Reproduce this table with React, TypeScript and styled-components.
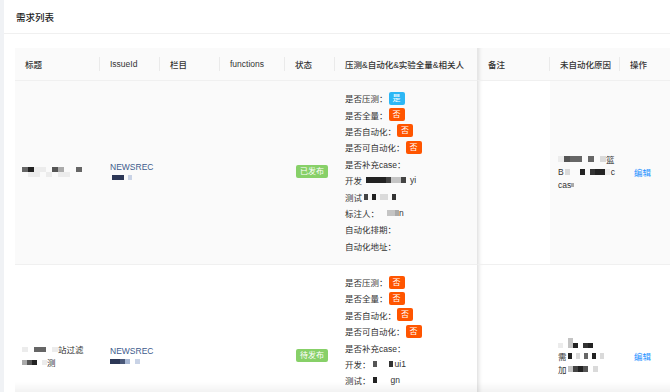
import React from 'react'
import styled, { createGlobalStyle } from 'styled-components'

const Global = createGlobalStyle`
  html, body {
    margin: 0;
    padding: 0;
    overflow: hidden;
    background: #f0f2f5;
    font-family: "Liberation Sans", "Noto Sans CJK SC", sans-serif;
    color: rgba(0, 0, 0, 0.85);
  }
`

const Page = styled.div`
  padding-left: 4px;
  height: 392px;
  overflow: hidden;
`

const Card = styled.div`
  background: #fff;
  height: 100%;
`

const CardHead = styled.div`
  height: 33px;
  display: flex;
  align-items: center;
  padding-left: 12px;
  border-bottom: 1px solid #f0f0f0;
  font-size: 9.5px;
  font-weight: 500;
  color: #222;
`

const CardBody = styled.div`
  padding: 14px 0 0 11px;
`

const Table = styled.table`
  width: 680px;
  table-layout: fixed;
  border-collapse: separate;
  border-spacing: 0;
  font-size: 8.5px;
`

const Th = styled.th<{ $fixed?: boolean; $sep?: boolean }>`
  position: relative;
  height: 32px;
  padding: 0 10px;
  text-align: left;
  font-weight: 500;
  color: #333;
  background: #fafafa;
  border-bottom: 1px solid #f0f0f0;
  white-space: nowrap;
  ${p => p.$fixed && `border-left: 1px solid #e6e6e6; box-shadow: inset 5px 0 4px -4px rgba(0,0,0,0.12);`}
  &::after {
    content: '';
    display: ${p => (p.$sep ? 'block' : 'none')};
    position: absolute;
    right: 0;
    top: 50%;
    width: 1px;
    height: 14px;
    margin-top: -7px;
    background: #eaeaea;
  }
`

const Td = styled.td<{ $fixed?: boolean; $hover?: boolean; $pl?: number }>`
  padding: 9px 4px 10px ${p => p.$pl ?? 10}px;
  vertical-align: middle;
  border-bottom: 1px solid #f0f0f0;
  background: ${p => (p.$hover && !p.$fixed ? '#fafafa' : '#fff')};
  color: #333;
  white-space: nowrap;
  ${p => p.$fixed && `border-left: 1px solid #e6e6e6; box-shadow: inset 5px 0 4px -4px rgba(0,0,0,0.12);`}
`

const Line = styled.div<{ $lh?: number }>`
  display: flex;
  align-items: center;
  height: ${p => p.$lh ?? 16.4}px;
  white-space: nowrap;
`

const Tag = styled.span<{ $color: string }>`
  display: inline-block;
  margin-left: 1px;
  padding: 0 4px;
  height: 13px;
  line-height: 13px;
  font-size: 8px;
  color: #fff;
  white-space: nowrap;
  border-radius: 2px;
  background: ${p => p.$color};
`

const Issue = styled.span`
  color: #3d5a8c;
  font-size: 8.5px;
`

const Action = styled.a`
  color: #1890ff;
  cursor: pointer;
`

const Fade = styled.div`
  position: fixed;
  left: 15px;
  right: 0;
  bottom: 0;
  height: 10px;
  background: linear-gradient(rgba(0, 0, 0, 0), rgba(0, 0, 0, 0.05));
  pointer-events: none;
`

// pixelated (mosaic) blocks that hide real names in the source
const MosaicBox = styled.span<{ $gap?: number }>`
  display: inline-flex;
  flex-direction: column;
  margin: 0 ${p => p.$gap ?? 0}px;
`

const MosaicRow = styled.span`
  display: flex;
`

const Px = styled.span<{ $c: string; $w: number; $h: number }>`
  display: block;
  width: ${p => p.$w}px;
  height: ${p => p.$h}px;
  background: ${p => p.$c};
`

const grays: Record<string, string> = {
  '0': '#222', '1': '#333', '2': '#444', '3': '#555', '4': '#666',
  '5': '#888', '6': '#aaa', '7': '#c4c4c4', '8': '#dadada', '9': '#ececec',
}
const navy: Record<string, string> = {
  '0': '#2c3756', '3': '#4a5878', '5': '#6b7a99', '7': '#a8b8d4', '8': '#c9d3e6', '9': '#e4eaf4',
}

function Mosaic({ p, w = 6, h = 6, gap = 0, tone = grays }: { p: string; w?: number; h?: number; gap?: number; tone?: Record<string, string> }) {
  return (
    <MosaicBox $gap={gap}>
      {p.split('|').map((row, i) => (
        <MosaicRow key={i}>
          {row.split('').map((ch, j) => (
            <Px key={j} $w={w} $h={h} $c={tone[ch] ?? 'transparent'} />
          ))}
        </MosaicRow>
      ))}
    </MosaicBox>
  )
}

const YES = '#2db7f5'
const NO = '#f50'
const GREEN = '#87d068'

function Checks({ tags, dev, test, mark }: { tags: boolean[]; dev: React.ReactNode; test: React.ReactNode; mark: React.ReactNode }) {
  const names = ['是否压测：', '是否全量：', '是否自动化：', '是否可自动化：']
  return (
    <div>
      {names.map((n, i) => (
        <Line key={n}>
          {n}
          <Tag $color={tags[i] ? YES : NO}>{tags[i] ? '是' : '否'}</Tag>
        </Line>
      ))}
      <Line>是否补充case：</Line>
      <Line>{dev}</Line>
      <Line>{test}</Line>
      <Line>{mark}</Line>
      <Line>自动化排期：</Line>
      <Line>自动化地址：</Line>
    </div>
  )
}

const cols = [85, 60, 60, 65, 50, 142, 73, 70, 75]
const heads = ['标题', 'IssueId', '栏目', 'functions', '状态', '压测&自动化&实验全量&相关人', '备注', '未自动化原因', '操作']

export default function App() {
  return (
    <Page>
      <Global />
      <Card>
        <CardHead>需求列表</CardHead>
        <CardBody>
          <Table>
            <colgroup>
              {cols.map((w, i) => <col key={i} style={{ width: w }} />)}
            </colgroup>
            <thead>
              <tr>
                {heads.map((h, i) => (
                  <Th key={h} $fixed={i === 6} $sep={i !== 5 && i !== 8}>{h}</Th>
                ))}
              </tr>
            </thead>
            <tbody>
              <tr>
                <Td $hover $pl={7}>
                  <Line><Mosaic p="4099.36..4|.99.9.99.." h={5} /></Line>
                </Td>
                <Td $hover>
                  <Line $lh={11}><Issue>NEWSREC</Issue></Line>
                  <Line $lh={9}><Mosaic p="000.8" w={4} h={5} tone={navy} gap={2} /></Line>
                </Td>
                <Td $hover />
                <Td $hover />
                <Td $hover><Tag $color={GREEN}>已发布</Tag></Td>
                <Td $hover>
                  <Checks
                    tags={[true, false, false, false]}
                    dev={<>开发<Mosaic p="00002772" w={5} gap={4} />yi</>}
                    test={<>测试<Mosaic p="2.0.88.1" w={4} gap={2} /></>}
                    mark={<>标注人：<Mosaic p="..776" w={4} />n</>}
                  />
                </Td>
                <Td $hover $fixed />
                <Td $hover $pl={8}>
                  <Line $lh={13}><Mosaic p="9344.4.8" w={6} />篮</Line>
                  <Line $lh={13}>B<Mosaic p="8..0.1009" w={5} gap={1} />c</Line>
                  <Line $lh={13}>cas<Mosaic p="6" w={3} h={4} /></Line>
                </Td>
                <Td $hover $pl={14}><Action>编辑</Action></Td>
              </tr>
              <tr>
                <Td $pl={7}>
                  <Line $lh={13}><Mosaic p="9.44.9" w={6} h={5} />站过滤</Line>
                  <Line $lh={13}><Mosaic p="630.9" w={5} h={5} />测</Line>
                </Td>
                <Td>
                  <Line $lh={11}><Issue>NEWSREC</Issue></Line>
                  <Line $lh={10}><Mosaic p="0037.8" w={5} h={5} tone={navy} /></Line>
                </Td>
                <Td />
                <Td />
                <Td><Tag $color={GREEN}>待发布</Tag></Td>
                <Td>
                  <Checks
                    tags={[false, false, false, false]}
                    dev={<>开发：<Mosaic p="3...1" w={4} gap={2} />ui1</>}
                    test={<>测试：<Mosaic p="0..." w={4} gap={2} />gn</>}
                    mark={<>标注人：<Mosaic p="..7.3" w={4} /></>}
                  />
                </Td>
                <Td $fixed />
                <Td $pl={8}>
                  <Line $lh={13}><Mosaic p="..7.....|9.70.10." w={5} h={5} /></Line>
                  <Line $lh={13}>需<Mosaic p="0.8.4.0.8" w={4} gap={1} /></Line>
                  <Line $lh={13}>加<Mosaic p="7203.8" w={5} gap={1} /></Line>
                </Td>
                <Td $pl={14}><Action>编辑</Action></Td>
              </tr>
            </tbody>
          </Table>
        </CardBody>
      </Card>
      <Fade />
    </Page>
  )
}
